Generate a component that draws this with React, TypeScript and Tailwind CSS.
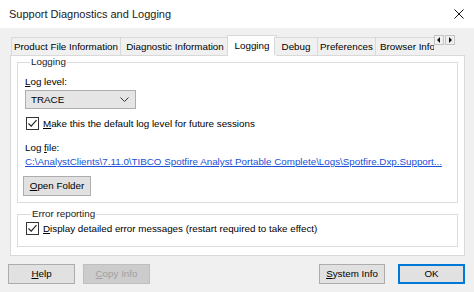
import React from "react"

const font = { fontFamily: '"Liberation Sans", Arial, sans-serif' }

function Check() {
  return (
    <div className="w-[13px] h-[13px] border border-[#333333] bg-white flex items-center justify-center shrink-0">
      <svg width="11" height="11" viewBox="0 0 11 11" fill="none" stroke="#222222" strokeWidth="1.2">
        <path d="M1.5 5.5 L4.2 8.2 L9.5 2.2" />
      </svg>
    </div>
  )
}

function Btn({ children, className = "" }: { children: React.ReactNode; className?: string }) {
  return (
    <div className={"h-[20px] flex items-center justify-center border border-[#adadad] bg-[#e1e1e1] text-black " + className}>
      {children}
    </div>
  )
}

export default function App() {
  const tabs = [
    { label: "Product File Information", w: "w-[110px]" },
    { label: "Diagnostic Information", w: "w-[110px]" },
    { label: "Logging", w: "w-[50px]", active: true },
    { label: "Debug", w: "w-[44px]" },
    { label: "Preferences", w: "w-[59px]" },
  ]

  return (
    <div className="w-[474px] h-[292px] bg-[#f0f0f0] flex flex-col text-[9.8px] leading-[12px] text-black overflow-hidden" style={font}>
      {/* Title bar */}
      <div className="h-[28px] bg-white flex items-center justify-between pl-[9px] pr-[10px] shrink-0">
        <span className="text-[11px] text-[#1a1a1a]">Support Diagnostics and Logging</span>
        <svg width="10" height="10" viewBox="0 0 10 10" stroke="#111111" strokeWidth="1">
          <path d="M0.5 0.5 L9.5 9.5 M9.5 0.5 L0.5 9.5" />
        </svg>
      </div>

      <div className="px-[10px] pt-[8px]">
        {/* Tab strip */}
        <div className="flex items-end h-[19px] pl-[1px] relative z-10">
          {tabs.map((t, i) =>
            t.active ? (
              <div
                key={i}
                className={"h-[21px] -mb-px -ml-[3px] -mr-[2px] bg-white border border-b-0 border-[#d9d9d9] flex items-center justify-center shrink-0 " + t.w}
              >
                {t.label}
              </div>
            ) : (
              <div
                key={i}
                className={"h-[18px] -ml-px first:ml-0 bg-[#f0f0f0] border border-b-0 border-[#d9d9d9] flex items-center justify-center shrink-0 " + t.w}
              >
                {t.label}
              </div>
            )
          )}
          {/* last tab is clipped by the scroll arrows, as in the dialog */}
          <div className="h-[18px] w-[59px] -ml-px bg-[#f0f0f0] border-l border-t border-[#d9d9d9] flex items-center pl-[4px] overflow-hidden whitespace-nowrap shrink-0">
            <span className="shrink-0">Browser Info</span>
          </div>
          <div className="self-start mt-[-1px] flex gap-[1px]">
            <div className="w-[10px] h-[10px] bg-[#f0f0f0] border border-[#c4c4c4] flex items-center justify-center">
              <svg width="4" height="6" viewBox="0 0 4 6"><path d="M3 0 L0 3 L3 6 Z" fill="#111" /></svg>
            </div>
            <div className="w-[10px] h-[10px] bg-[#f0f0f0] border border-[#c4c4c4] flex items-center justify-center">
              <svg width="4" height="6" viewBox="0 0 4 6"><path d="M1 0 L4 3 L1 6 Z" fill="#111" /></svg>
            </div>
          </div>
        </div>

        {/* Tab panel */}
        <div className="w-[455px] h-[201px] bg-white border border-[#d9d9d9] px-[6px]">
          <fieldset className="border border-[#dcdcdc] pl-[7px] pr-[7px] pb-[6px]">
            <legend className="ml-[5px] px-[1px] text-[#222]">Logging</legend>
            <div className="mt-[8px]"><u>L</u>og level:</div>
            <div className="mt-[2px] w-[111px] h-[19px] bg-[#e5e5e5] border border-[#adadad] flex items-center justify-between pl-[5px] pr-[6px]">
              <span>TRACE</span>
              <svg width="9" height="5" viewBox="0 0 9 5" fill="none" stroke="#333" strokeWidth="1">
                <path d="M0.5 0.5 L4.5 4.5 L8.5 0.5" />
              </svg>
            </div>
            <div className="mt-[8px] flex items-center gap-[4px] ml-[1px]">
              <Check />
              <span><u>M</u>ake this the default log level for future sessions</span>
            </div>
            <div className="mt-[12px]">Log <u>f</u>ile:</div>
            <div className="mt-[2px] text-[#1a4fd6] underline whitespace-nowrap">
              C:\AnalystClients\7.11.0\TIBCO Spotfire Analyst Portable Complete\Logs\Spotfire.Dxp.Support...
            </div>
            <Btn className="mt-[8px] w-[68px] -ml-[2px]">
              <span><u>O</u>pen Folder</span>
            </Btn>
          </fieldset>

          <fieldset className="mt-[5px] border border-[#dcdcdc] pl-[8px] pb-[11px]">
            <legend className="ml-[5px] px-[1px] text-[#222]">Error reporting</legend>
            <div className="mt-[2px] flex items-center gap-[4px]">
              <Check />
              <span><u>D</u>isplay detailed error messages (restart required to take effect)</span>
            </div>
          </fieldset>
        </div>
      </div>

      {/* Bottom buttons */}
      <div className="mt-[8px] flex items-center px-[8px]">
        <Btn className="w-[67px]">
          <span><u>H</u>elp</span>
        </Btn>
        <div className="ml-[8px] w-[67px] h-[20px] flex items-center justify-center border border-[#bfbfbf] bg-[#cccccc] text-[#a0a0a0]">
          <span><u>C</u>opy Info</span>
        </div>
        <Btn className="ml-auto w-[66px]">
          <span><u>S</u>ystem Info</span>
        </Btn>
        <div className="ml-[13px] mr-[1px] w-[67px] h-[20px] flex items-center justify-center border-2 border-[#0078d7] bg-[#e1e1e1]">
          OK
        </div>
      </div>
    </div>
  )
}
